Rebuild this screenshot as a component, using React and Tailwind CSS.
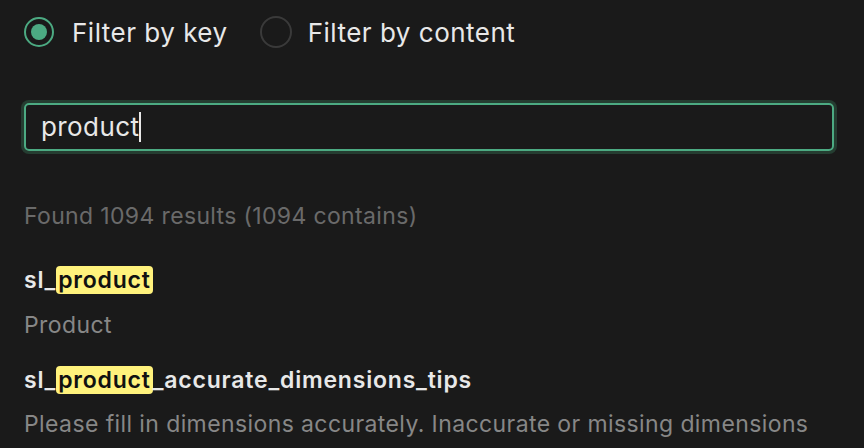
export default function App() {
  return (
    <div
      className="h-[448px] w-[864px] overflow-hidden bg-[#1a1a1a] pl-6 pr-[30px] text-[#e8e8e8]"
      style={{ fontFamily: 'Inter, "Noto Sans", sans-serif' }}
    >
      {/* Filter mode */}
      <div className="flex h-[64px] items-center">
        <label className="flex items-center gap-[18px]">
          <span className="flex h-[30px] w-[30px] items-center justify-center rounded-full border-2 border-[#4caa82]">
            <span className="h-[16px] w-[16px] rounded-full bg-[#4caa82]" />
          </span>
          <span className="text-[26px] tracking-[0.5px]">Filter by key</span>
        </label>
        <label className="ml-[32px] flex items-center gap-[16px]">
          <span className="h-[32px] w-[32px] rounded-full border-2 border-[#3a3a3a]" />
          <span className="text-[26px] tracking-[0.5px]">Filter by content</span>
        </label>
      </div>

      {/* Search input */}
      <div className="mt-[39px] flex h-[48px] items-center rounded-[5px] border-2 border-[#4caa82] px-[15px] shadow-[0_0_0_3px_#253d31]">
        <span className="text-[26px] leading-none tracking-[0.4px]">product</span>
        <span className="h-[30px] w-[2px] bg-[#e8e8e8]" />
      </div>

      <p className="mt-[51px] text-[23px] leading-[28px] tracking-[0.35px] text-[#6a6a6a]">
        Found 1094 results (1094 contains)
      </p>

      <div className="mt-[36px] text-[23px] font-semibold leading-[28px] tracking-[0.8px]">
        sl_<span className="rounded-[4px] bg-[#fff27c] px-[2px] text-[#111]">product</span>
      </div>
      <p className="mt-[17px] text-[23px] leading-[28px] tracking-[0.4px] text-[#878787]">Product</p>

      <div className="mt-[27px] text-[23px] font-semibold leading-[28px] tracking-[0.8px]">
        sl_<span className="rounded-[4px] bg-[#fff27c] px-[2px] text-[#111]">product</span>_accurate_dimensions_tips
      </div>
      <p className="mt-[16px] whitespace-nowrap text-[23px] leading-[28px] tracking-[0.4px] text-[#878787]">
        Please fill in dimensions accurately. Inaccurate or missing dimensions
      </p>
    </div>
  )
}
